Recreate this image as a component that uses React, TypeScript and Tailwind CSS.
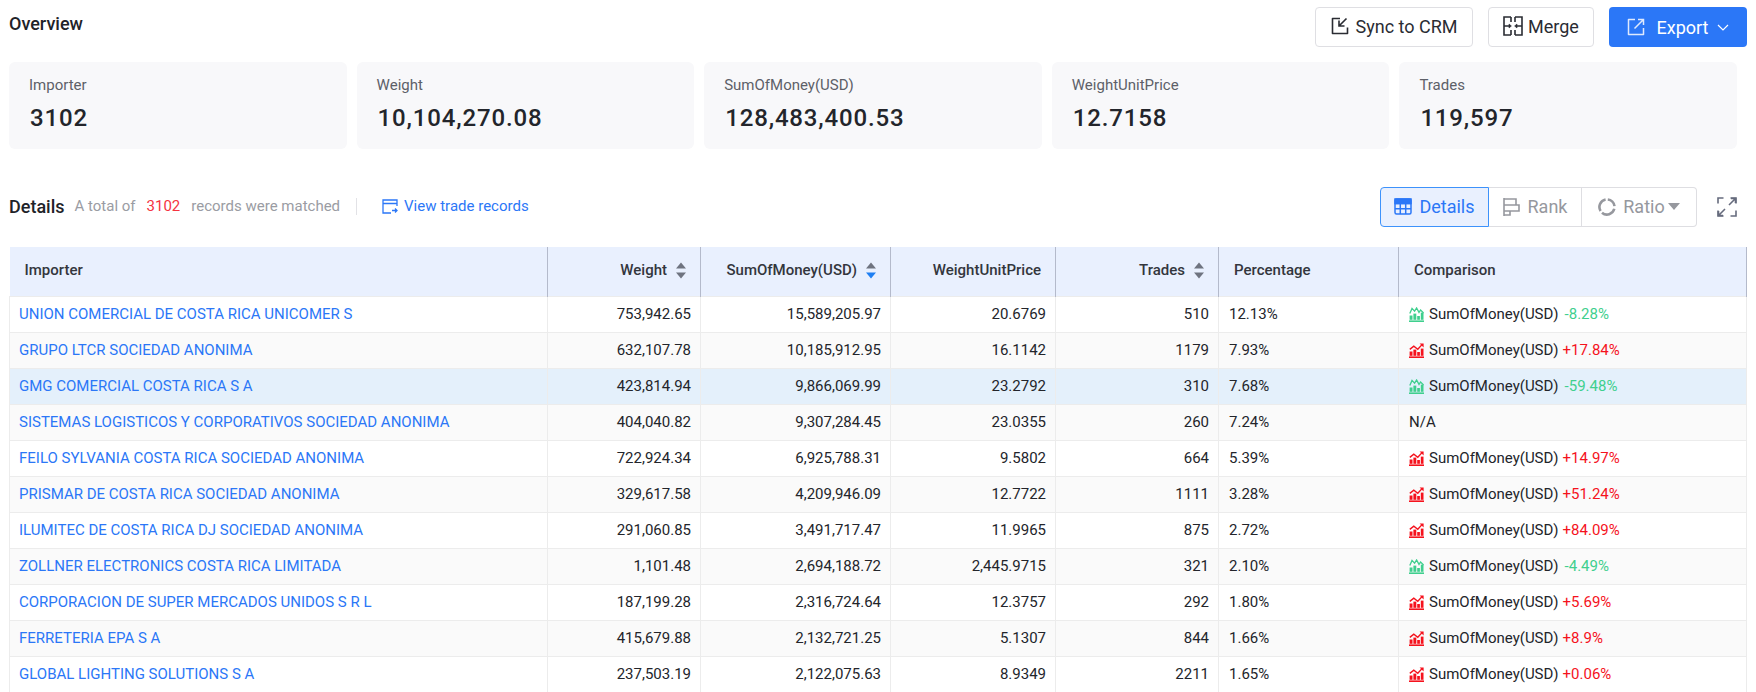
import { ReactNode } from "react";

const font = "font-['Roboto',sans-serif]";

const stats = [
  { label: "Importer", value: "3102" },
  { label: "Weight", value: "10,104,270.08" },
  { label: "SumOfMoney(USD)", value: "128,483,400.53" },
  { label: "WeightUnitPrice", value: "12.7158" },
  { label: "Trades", value: "119,597" },
];

const rows = [
  ["UNION COMERCIAL DE COSTA RICA UNICOMER S", "753,942.65", "15,589,205.97", "20.6769", "510", "12.13%", "-8.28%"],
  ["GRUPO LTCR SOCIEDAD ANONIMA", "632,107.78", "10,185,912.95", "16.1142", "1179", "7.93%", "+17.84%"],
  ["GMG COMERCIAL COSTA RICA S A", "423,814.94", "9,866,069.99", "23.2792", "310", "7.68%", "-59.48%"],
  ["SISTEMAS LOGISTICOS Y CORPORATIVOS SOCIEDAD ANONIMA", "404,040.82", "9,307,284.45", "23.0355", "260", "7.24%", ""],
  ["FEILO SYLVANIA COSTA RICA SOCIEDAD ANONIMA", "722,924.34", "6,925,788.31", "9.5802", "664", "5.39%", "+14.97%"],
  ["PRISMAR DE COSTA RICA SOCIEDAD ANONIMA", "329,617.58", "4,209,946.09", "12.7722", "1111", "3.28%", "+51.24%"],
  ["ILUMITEC DE COSTA RICA DJ SOCIEDAD ANONIMA", "291,060.85", "3,491,717.47", "11.9965", "875", "2.72%", "+84.09%"],
  ["ZOLLNER ELECTRONICS COSTA RICA LIMITADA", "1,101.48", "2,694,188.72", "2,445.9715", "321", "2.10%", "-4.49%"],
  ["CORPORACION DE SUPER MERCADOS UNIDOS S R L", "187,199.28", "2,316,724.64", "12.3757", "292", "1.80%", "+5.69%"],
  ["FERRETERIA EPA S A", "415,679.88", "2,132,721.25", "5.1307", "844", "1.66%", "+8.9%"],
  ["GLOBAL LIGHTING SOLUTIONS S A", "237,503.19", "2,122,075.63", "8.9349", "2211", "1.65%", "+0.06%"],
];

function SortArrows({ active }: { active?: boolean }) {
  return (
    <svg width="10" height="17" viewBox="0 0 10 17" className="ml-[9px] shrink-0">
      <path d="M5 0.5 L10 6.5 H0 Z" fill="#6f7480" />
      <path d="M5 16.5 L10 10.5 H0 Z" fill={active ? "#1f7ff2" : "#6f7480"} />
    </svg>
  );
}

function TrendIcon({ up }: { up: boolean }) {
  const color = up ? "#f5121d" : "#3fcf8e";
  return (
    <svg width="15" height="15" viewBox="0 0 15 15" className="shrink-0">
      <rect x="0" y="13.4" width="15" height="1.6" fill={color} />
      <rect x="0.6" y="8.5" width="2.9" height="4.3" fill={color} />
      <rect x="4.4" y="6.6" width="2.9" height="6.2" fill={color} />
      <rect x="8.2" y="9" width="2.7" height="3.8" fill={color} />
      <rect x="11.8" y="5.6" width="2.7" height="7.2" fill={color} />
      {up ? (
        <>
          <path d="M0.8 6.4 L4.8 3.2 L8.8 6.2 L13 1.6" fill="none" stroke={color} strokeWidth="1.4" />
          <path d="M10.6 0.4 H14.6 V4.4 Z" fill={color} />
        </>
      ) : (
        <path d="M0.8 6.4 L3 1.4 L5.6 4.2 L7.6 1 L10 5.4 L11.6 3 L14.6 6" fill="none" stroke={color} strokeWidth="1.3" />
      )}
    </svg>
  );
}

function Button({ children, className }: { children: ReactNode; className: string }) {
  return (
    <button className={`flex h-10 items-center justify-center rounded-[4px] text-[18px] ${className}`}>
      {children}
    </button>
  );
}

function HeadCell({ children, right, sort, active }: { children: ReactNode; right?: boolean; sort?: boolean; active?: boolean }) {
  return (
    <th className="h-[49px] border-r border-[#b4bacb] p-0 font-medium">
      <div className={`flex items-center pb-[2px] pl-[15px] pr-[14px] text-[15px] text-[#33363d] ${right ? "justify-end" : "justify-start"}`}>
        {children}
        {sort && <SortArrows active={active} />}
      </div>
    </th>
  );
}

export default function App() {
  return (
    <div className={`h-[692px] overflow-hidden bg-white px-[9px] ${font}`}>
      <div className="flex items-start justify-between pt-[7px]">
        <div className="mt-[6px] text-[18px] font-medium leading-[22px] text-[#1f2329]">Overview</div>
        <div className="flex gap-[15px]">
          <Button className="w-[158px] gap-[7px] border border-[#dfdfe3] bg-white pb-[2px] text-[#2a2c33]">
            <svg width="18" height="18" viewBox="0 0 18 18" fill="none" stroke="#2a2c33" strokeWidth="1.6">
              <path d="M9 1.5 H1.5 V16.5 H16.5 V10.5" strokeLinejoin="round" />
              <path d="M15.5 1.5 L8 9 M8 3.5 V9 H13.5" />
            </svg>
            Sync to CRM
          </Button>
          <Button className="w-[106px] gap-[5px] border border-[#dfdfe3] bg-white pb-[2px] text-[#2a2c33]">
            <svg width="20" height="20" viewBox="0 0 20 20" fill="none" stroke="#2a2c33" strokeWidth="1.6">
              <path d="M8 1 H1 V19 H8 M8 1 V6 M8 14 V19 M12 1 H19 V19 H12 M12 1 V6 M12 14 V19" />
              <path d="M1 10 H7 M13 10 H19" />
              <path d="M6 8 L8.4 10 L6 12 Z M14 8 L11.6 10 L14 12 Z" fill="#2a2c33" strokeWidth="0.6" />
            </svg>
            Merge
          </Button>
          <Button className="w-[138px] rounded-[2px] bg-[#2b77f7] text-white">
            <svg width="18" height="18" viewBox="0 0 18 18" fill="none" stroke="#dfe9fd" strokeWidth="1.5" className="mr-[12px]">
              <path d="M8 1.5 H1.5 V16.5 H16.5 V10" strokeLinejoin="round" />
              <path d="M7.5 10.5 L16 2 M11 1.5 H16.5 V7" />
            </svg>
            Export
            <svg width="12" height="7" viewBox="0 0 12 7" fill="none" stroke="#ffffff" strokeWidth="1.2" className="ml-[9px]">
              <path d="M1 1 L6 6 L11 1" />
            </svg>
          </Button>
        </div>
      </div>

      <div className="mt-[15px] flex">
        {stats.map((s) => (
          <div key={s.label} className="mr-[10px] h-[87px] flex-1 rounded-[6px] bg-[#f8f8fa] pl-[20px] pt-[14px]">
            <div className="text-[15px] leading-[18px] text-[#5d6068]">{s.label}</div>
            <div className="ml-px mt-[8px] text-[24px] font-medium leading-[32px] tracking-[0.85px] text-[#23252b]">{s.value}</div>
          </div>
        ))}
      </div>

      <div className="mt-[38px] flex h-10 items-center justify-between">
        <div className="flex items-center pb-[2px] text-[15px]">
          <span className="text-[18px] font-medium text-[#1f2329]">Details</span>
          <span className="ml-[10px] text-[#9a9ca3]">A total of</span>
          <span className="ml-[11px] text-[#f5333f]">3102</span>
          <span className="ml-[11px] text-[#9a9ca3]">records were matched</span>
          <span className="ml-[16px] h-[17px] w-px bg-[#e2e2e6]" />
          <span className="ml-[25px] flex items-center gap-[6px] text-[#2b77f7]">
            <svg width="16" height="15" viewBox="0 0 16 15" fill="none" stroke="#2b77f7" strokeWidth="1.3">
              <path d="M15 7 V1 H1 V14 H9 M1 4.5 H15" />
              <path d="M10 11.5 H15 M13 9.5 L15 11.5 L13 13.5" />
            </svg>
            View trade records
          </span>
        </div>
        <div className="flex items-center">
          <div className="flex h-10 text-[18px] text-[#96989e]">
            <div className="flex w-[109px] items-center justify-center gap-[7px] rounded-l-[4px] border border-[#3d92fb] bg-[#e9f0fe] pb-[1px] text-[#2b77f7]">
              <svg width="18" height="17" viewBox="0 0 18 17" fill="none" stroke="#2b77f7" strokeWidth="1.5">
                <rect x="1" y="1" width="16" height="15" rx="1.5" />
                <path d="M1 5.5 H17 M1 10.7 H17 M6.3 5.5 V16 M11.7 5.5 V16" />
                <rect x="1" y="1" width="16" height="4.5" fill="#2b77f7" />
              </svg>
              Details
            </div>
            <div className="flex w-[93px] items-center justify-center gap-[8px] border-y border-r border-[#dedee2] pb-[1px]">
              <svg width="17" height="18" viewBox="0 0 17 18" fill="none" stroke="#96989e" strokeWidth="1.6">
                <path d="M1 0 V18 M1 1 H13 V7 H1 M1 7 H16 V13 H1 M1 13 H7 V17 H1" />
              </svg>
              Rank
            </div>
            <div className="flex w-[115px] items-center justify-center gap-[7px] rounded-r-[4px] border-y border-r border-[#dedee2] pb-[1px]">
              <svg width="18" height="18" viewBox="0 0 18 18" fill="none" stroke="#96989e" strokeWidth="2.6">
                <path d="M9.8 1.5 A7.6 7.6 0 0 1 16.5 8.2 M16.3 10.8 A7.6 7.6 0 0 1 4 14.7 M2.6 13 A7.6 7.6 0 0 1 7.6 1.5" />
              </svg>
              <span className="-mr-[4px]">Ratio</span>
              <svg width="12" height="7" viewBox="0 0 12 7"><path d="M0 0 H12 L6 7 Z" fill="#96989e" /></svg>
            </div>
          </div>
          <svg width="20" height="20" viewBox="0 0 20 20" fill="none" stroke="#666b7d" strokeWidth="1.6" className="ml-[20px] mr-[10px]">
            <path d="M1 6.5 V1 H6.5 M13.5 1 H19 V6.5 M19 13.5 V19 H13.5 M6.5 19 H1 V13.5" />
            <path d="M12 8 L18.2 1.8 M14 1.5 H18.5 V6 M8 12 L1.8 18.2 M6 18.5 H1.5 V14" />
          </svg>
        </div>
      </div>

      <table className="mt-[20px] w-[1737px] table-fixed border-collapse text-[15px]">
        <colgroup>
          <col className="w-[538px]" />
          <col className="w-[153px]" />
          <col className="w-[190px]" />
          <col className="w-[165px]" />
          <col className="w-[163px]" />
          <col className="w-[180px]" />
          <col className="w-[348px]" />
        </colgroup>
        <thead className="bg-[#e9f0fe]">
          <tr>
            <HeadCell>Importer</HeadCell>
            <HeadCell right sort>Weight</HeadCell>
            <HeadCell right sort active>SumOfMoney(USD)</HeadCell>
            <HeadCell right>WeightUnitPrice</HeadCell>
            <HeadCell right sort>Trades</HeadCell>
            <HeadCell>Percentage</HeadCell>
            <HeadCell>Comparison</HeadCell>
          </tr>
        </thead>
        <tbody>
          {rows.map((r, i) => {
            const up = r[6].startsWith("+");
            const bg = i === 2 ? "bg-[#e4f0fb]" : i % 2 === 1 ? "bg-[#fafafa]" : "bg-white";
            return (
              <tr key={r[0]} className={`h-9 ${bg}`}>
                <td className="border border-[#ececec] pl-[9px] text-[#2b77f7]">{r[0]}</td>
                <td className="border border-[#ececec] pr-[9px] text-right text-[#23252b]">{r[1]}</td>
                <td className="border border-[#ececec] pr-[9px] text-right text-[#23252b]">{r[2]}</td>
                <td className="border border-[#ececec] pr-[9px] text-right text-[#23252b]">{r[3]}</td>
                <td className="border border-[#ececec] pr-[9px] text-right text-[#23252b]">{r[4]}</td>
                <td className="border border-[#ececec] pl-[10px] text-[#23252b]">{r[5]}</td>
                <td className="border border-[#ececec] pl-[10px] text-[#23252b]">
                  {r[6] ? (
                    <div className="flex items-center">
                      <TrendIcon up={up} />
                      <span className="ml-[5px]">SumOfMoney(USD)</span>
                      <span className={`${up ? "ml-[4px] text-[#f5121d]" : "ml-[6px] text-[#3fcf8e]"}`}>{r[6]}</span>
                    </div>
                  ) : (
                    "N/A"
                  )}
                </td>
              </tr>
            );
          })}
        </tbody>
      </table>
    </div>
  );
}
